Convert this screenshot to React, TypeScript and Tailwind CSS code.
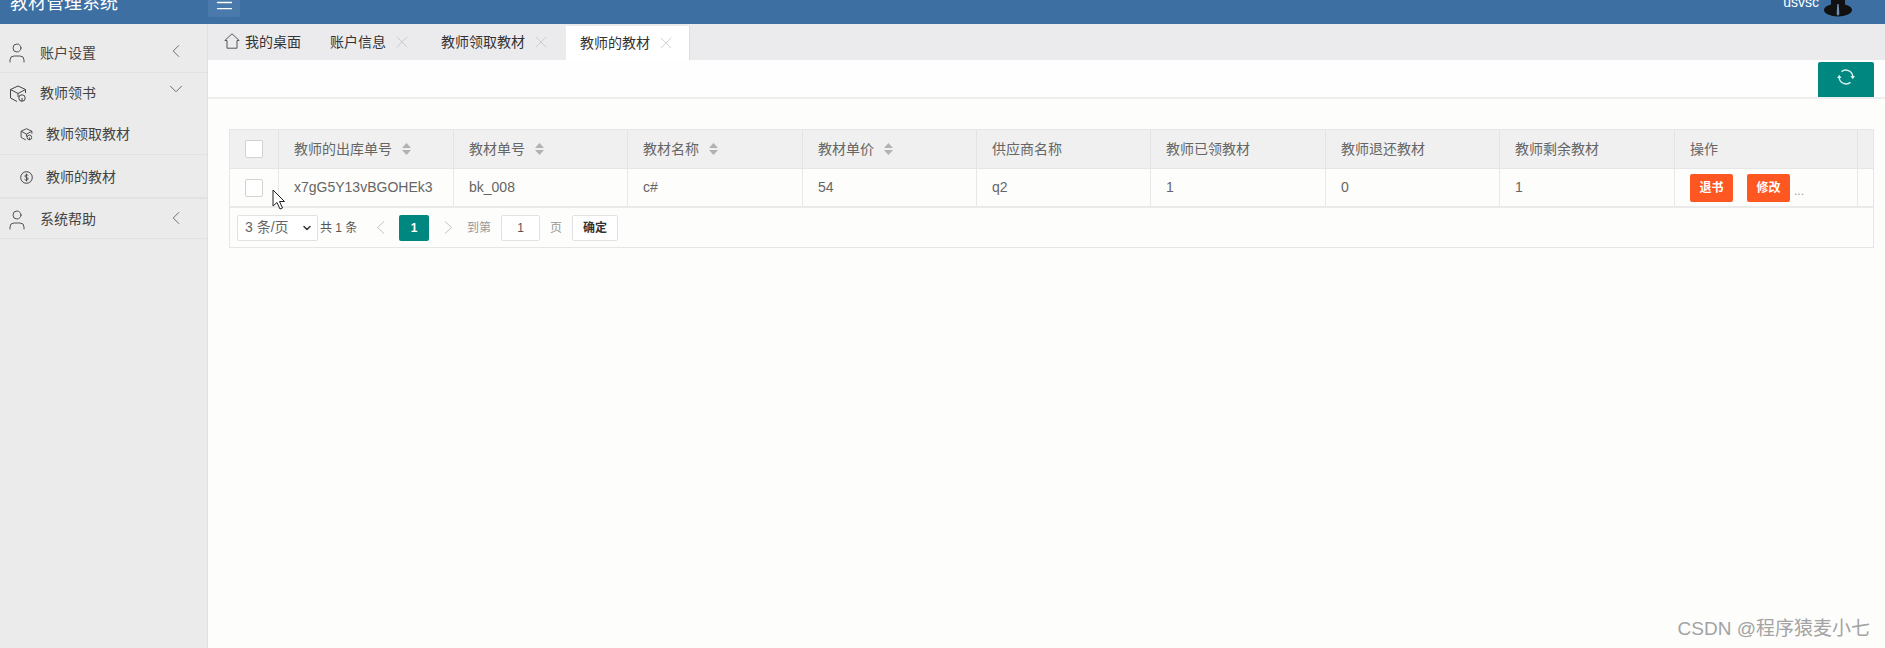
import { ChevronLeft, ChevronDown, User, X, Menu } from "lucide-react";

const FONT = "font-['Liberation_Sans','Noto_Sans_CJK_SC',sans-serif]";

const GRID = "grid grid-cols-[49px_175px_174px_175px_174px_174px_175px_174px_175px_183px_1fr]";

function Sort() {
  return (
    <svg width="9" height="12" viewBox="0 0 9 12" className="ml-[10px] shrink-0">
      <path d="M4.5 0 L9 5 H0 Z M0 7 H9 L4.5 12 Z" fill="#b2b2b2" />
    </svg>
  );
}

function Check() {
  return <div className="w-[18px] h-[18px] bg-white border border-[#d2d2d2] rounded-[2px]" />;
}

function HomeIcon() {
  return (
    <svg width="16" height="16" viewBox="0 0 16 16" fill="none" stroke="#555" strokeWidth="1" className="ml-[1px] mr-[5px] -mt-[3px] shrink-0">
      <path d="M0.8 7.5 L8 0.8 L15.2 7.5 H13 V15.2 H3 V7.5 Z" />
    </svg>
  );
}

function BoxIcon({ size }: { size: number }) {
  return (
    <svg width={size} height={size} viewBox="0 0 18 18" fill="none" stroke="#444" strokeWidth={size > 14 ? 1 : 1.3}>
      <path d="M9 1 L16.5 4.5 V8 M9 1 L1.5 4.5 V13 L8 16.5 M1.5 4.5 L9 8.5 L16.5 4.5 M9 8.5 V12" />
      <circle cx="13" cy="13" r="3.2" />
      <path d="M13 13 V16.5" />
    </svg>
  );
}

function DollarIcon() {
  return (
    <svg width="13" height="13" viewBox="0 0 13 13" className="shrink-0">
      <circle cx="6.5" cy="6.5" r="5.8" fill="none" stroke="#444" strokeWidth="1" />
      <path d="M8.4 4.7 C8 3.6 5 3.4 4.8 5 C4.6 6.6 8.4 6 8.2 8 C8 9.6 5 9.4 4.5 8.2 M6.5 2.6 V10.4" fill="none" stroke="#444" strokeWidth="0.9" />
    </svg>
  );
}

function RefreshIcon() {
  return (
    <svg width="18" height="18" viewBox="0 0 18 18" fill="none" className="-mt-[6px]">
      <path d="M4.5 3.6 A7 7 0 0 1 15.8 8" stroke="#d8f0ee" strokeWidth="1.4" />
      <path d="M13.5 14.4 A7 7 0 0 1 2.2 10" stroke="#d8f0ee" strokeWidth="1.4" />
      <polygon points="13.4,8 18,8 15.8,11.2" fill="#d8f0ee" />
      <polygon points="0,10 4.6,10 2.2,6.8" fill="#d8f0ee" />
    </svg>
  );
}

function Pager({ dir, cls }: { dir: "l" | "r"; cls: string }) {
  return (
    <svg width="9" height="13" viewBox="0 0 9 13" fill="none" stroke="#c2c2c2" strokeWidth="1" className={`${cls} shrink-0`}>
      <path d={dir === "l" ? "M8 0.5 L1.5 6.5 L8 12.5" : "M1 0.5 L7.5 6.5 L1 12.5"} />
    </svg>
  );
}

function Tab({ label, close = true, active = false, home = false, w }: { label: string; close?: boolean; active?: boolean; home?: boolean; w: string }) {
  return (
    <div className={`${w} flex items-center text-[14px] text-[#333] shrink-0 ${active ? "bg-white pl-[14px] mt-[2px] h-[34px]" : home ? "h-[36px]" : "pl-[10px] h-[36px]"}`}>
      {home && <HomeIcon />}
      <span className="whitespace-nowrap">{label}</span>
      {close && <X size={20} strokeWidth={0.8} className="ml-[6px] text-[#bbb] shrink-0" />}
    </div>
  );
}

function Th({ label, sort = false }: { label: string; sort?: boolean }) {
  return (
    <div className="h-full flex items-center pl-[15px] border-r border-[#e4e4e4] text-[14px] text-[#666]">
      <span className="whitespace-nowrap">{label}</span>
      {sort && <Sort />}
    </div>
  );
}

function Td({ label }: { label: string }) {
  return (
    <div className="h-full flex items-center pl-[15px] border-r border-[#e8e8e8] text-[14px] text-[#666]">
      <span className="whitespace-nowrap">{label}</span>
    </div>
  );
}

function Btn({ label }: { label: string }) {
  return (
    <div className="w-[43px] h-[28px] bg-[#ff5722] text-white text-[12px] font-bold flex items-center justify-center rounded-[2px] shrink-0">
      {label}
    </div>
  );
}

export default function App() {
  const chevLeft = <ChevronLeft size={22} strokeWidth={0.9} className="text-[#555]" />;
  return (
    <div className={`${FONT} relative w-[1885px] h-[648px] overflow-hidden bg-[#fdfdfc]`}>
      <header className="h-[42px] -mt-[18px] bg-[#3d6fa3] flex items-center text-white">
        <div className="w-[208px] pl-[10px] text-[18px] whitespace-nowrap shrink-0">教材管理系统</div>
        <div className="w-[32px] h-[35px] bg-[#4a7aab] rounded-[2px] flex items-center justify-center shrink-0 self-start">
          <Menu size={21} strokeWidth={1.5} className="mt-[6px]" />
        </div>
        <div className="ml-auto flex items-center mr-[33px] self-start">
          <span className="text-[14px] mt-[6px] mr-[5px]">usvsc</span>
          <svg width="28" height="35" viewBox="0 0 28 35">
            <circle cx="14" cy="10" r="9" fill="#111" />
            <rect x="7" y="14" width="14" height="10" fill="#111" />
            <ellipse cx="14" cy="28" rx="14" ry="6.5" fill="#111" />
            <path d="M13.3 22 H14.7 L15.4 32 L14 34 L12.6 32 Z" fill="#6f8fae" />
          </svg>
        </div>
      </header>

      <div className="flex h-[624px]">
        <aside className="w-[208px] shrink-0 bg-[#ebebeb] border-r border-[#e0e0e0]">
          <div className="h-[49px] pt-[10px] pl-[5px] flex items-center border-b border-[#e2e2e2] text-[14px] text-[#444]">
            <div className="w-[35px] shrink-0"><User size={24} strokeWidth={0.9} className="text-[#444]" /></div>
            <span className="whitespace-nowrap">账户设置</span>
            <div className="ml-auto mr-[20px] -mt-[4px]">{chevLeft}</div>
          </div>
          <div className="h-[40px] pt-[1px] pl-[9px] flex items-center text-[14px] text-[#444]">
            <div className="w-[31px] shrink-0"><BoxIcon size={18} /></div>
            <span className="whitespace-nowrap">教师领书</span>
            <div className="ml-auto mr-[20px] -mt-[9px]"><ChevronDown size={22} strokeWidth={0.9} className="text-[#555]" /></div>
          </div>
          <div className="h-[42px] pt-[1px] pl-[20px] flex items-center border-b border-[#e2e2e2] text-[14px] text-[#444]">
            <div className="w-[26px] shrink-0"><BoxIcon size={13} /></div>
            <span className="whitespace-nowrap">教师领取教材</span>
          </div>
          <div className="h-[44px] pt-[3px] pl-[20px] flex items-center border-b-2 border-[#e2e2e2] text-[14px] text-[#444]">
            <div className="w-[26px] shrink-0"><DollarIcon /></div>
            <span className="whitespace-nowrap">教师的教材</span>
          </div>
          <div className="h-[40px] pt-[2px] pl-[5px] flex items-center border-b border-[#e2e2e2] text-[14px] text-[#444]">
            <div className="w-[35px] shrink-0"><User size={24} strokeWidth={0.9} className="text-[#444]" /></div>
            <span className="whitespace-nowrap">系统帮助</span>
            <div className="ml-auto mr-[20px] -mt-[4px]">{chevLeft}</div>
          </div>
        </aside>

        <main className="flex-1 min-w-0">
          <div className="h-[36px] bg-[#ebebee] flex pl-[15px] items-start">
            <Tab w="w-[97px]" label="我的桌面" close={false} home />
            <Tab w="w-[111px]" label="账户信息" />
            <Tab w="w-[135px]" label="教师领取教材" />
            <Tab w="w-[123px]" label="教师的教材" active />
            <div className="h-[34px] w-px bg-[#dcdcdc] mt-[2px]" />
          </div>

          <div className="h-[39px] border-b-2 border-[#eeeeee] flex justify-end pr-[11px] pt-[2px] bg-[#fefefe]">
            <div className="w-[56px] h-[35px] bg-[#00877f] rounded-t-[2px] flex items-center justify-center">
              <RefreshIcon />
            </div>
          </div>

          <section className="mt-[30px] ml-[21px] mr-[11px] border border-[#e6e6e6] bg-[#fdfdfc]">
            <div className={`${GRID} h-[39px] bg-[#f0f0f0] border-b border-[#e6e6e6]`}>
              <div className="h-full flex items-center justify-center border-r border-[#e4e4e4]"><Check /></div>
              <Th label="教师的出库单号" sort />
              <Th label="教材单号" sort />
              <Th label="教材名称" sort />
              <Th label="教材单价" sort />
              <Th label="供应商名称" />
              <Th label="教师已领教材" />
              <Th label="教师退还教材" />
              <Th label="教师剩余教材" />
              <Th label="操作" />
              <div />
            </div>
            <div className={`${GRID} h-[39px] border-b-2 border-[#eaeaea]`}>
              <div className="h-full flex items-center justify-center border-r border-[#e8e8e8]"><Check /></div>
              <Td label="x7gG5Y13vBGOHEk3" />
              <Td label="bk_008" />
              <Td label="c#" />
              <Td label="54" />
              <Td label="q2" />
              <Td label="1" />
              <Td label="0" />
              <Td label="1" />
              <div className="h-full flex items-center pl-[15px] border-r border-[#e8e8e8]">
                <Btn label="退书" />
                <div className="w-[14px] shrink-0" />
                <Btn label="修改" />
                <span className="ml-[4px] mt-[6px] text-[12px] text-[#999]">...</span>
              </div>
              <div />
            </div>
            <div className="h-[39px] flex items-center pl-[7px] text-[12px] text-[#666]">
              <div className="w-[81px] h-[26px] bg-white border border-[#e2e2e2] rounded-[2px] flex items-center pl-[7px] text-[14px] text-[#666] shrink-0">
                <span className="whitespace-nowrap">3 条/页</span>
                <ChevronDown size={12} strokeWidth={3} className="ml-auto mr-[4px] text-[#333]" />
              </div>
              <span className="ml-[2px] w-[37px] text-[12px] whitespace-nowrap text-[#555] shrink-0">共 1 条</span>
              <Pager dir="l" cls="ml-[19px]" />
              <div className="ml-[14px] w-[30px] h-[26px] bg-[#00877f] rounded-[2px] text-white font-bold flex items-center justify-center shrink-0">1</div>
              <Pager dir="r" cls="ml-[15px]" />
              <span className="ml-[14px] w-[24px] text-[#999] whitespace-nowrap shrink-0">到第</span>
              <div className="ml-[10px] w-[39px] h-[26px] bg-white border border-[#e2e2e2] rounded-[2px] flex items-center justify-center text-[#555] shrink-0">1</div>
              <span className="ml-[10px] w-[12px] text-[#999] shrink-0">页</span>
              <div className="ml-[10px] w-[46px] h-[26px] bg-white border border-[#e2e2e2] rounded-[2px] flex items-center justify-center text-[#333] text-[12px] font-bold shrink-0">确定</div>
            </div>
          </section>
        </main>
      </div>

      <svg width="14" height="22" viewBox="0 0 14 22" className="absolute left-[272px] top-[189px]">
        <path d="M1 1 L1 17 L5 13.5 L8 20 L10.5 19 L7.5 12.5 L12.5 12.5 Z" fill="#fff" stroke="#222" strokeWidth="1" />
      </svg>

      <div className="absolute right-[15px] top-[617px] text-[19px] leading-[24px] text-[#a3a3a3] whitespace-nowrap">CSDN @程序猿麦小七</div>
    </div>
  );
}
